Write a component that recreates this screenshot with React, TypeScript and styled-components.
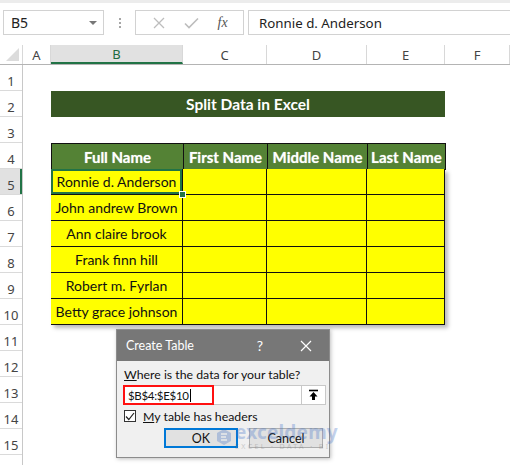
import React from "react";
import styled, { createGlobalStyle } from "styled-components";

const GlobalStyle = createGlobalStyle`
  * { box-sizing: border-box; }
  html, body { margin: 0; padding: 0; background: #fff; }
  body { font-family: "Noto Sans", "Liberation Sans", sans-serif; }
`;

const UI_FONT = `"Noto Sans", "Liberation Sans", sans-serif`;
const CELL_FONT = `Lato, "Liberation Sans", sans-serif`;
const DIALOG_FONT = `Lato, "Noto Sans", sans-serif`;
const GREEN = "#217346";

const Window = styled.div`
  position: relative;
  width: 510px;
  height: 465px;
  overflow: hidden;
  background: #fff;
  border-top: 3px solid #ececec;
  display: flex;
  flex-direction: column;
`;

/* ---------- formula bar ---------- */
const FormulaBar = styled.div`
  display: flex;
  align-items: stretch;
  height: 25px;
  margin-top: 7px;
  padding-left: 3px;
`;

const NameBox = styled.div`
  display: flex;
  align-items: center;
  justify-content: space-between;
  width: 101px;
  border: 1px solid #d2d2d2;
  padding: 0 6px 0 7px;
  font-family: ${UI_FONT};
  font-size: 14px;
  color: #222;
`;

const Caret = styled.span`
  width: 0;
  height: 0;
  border-left: 4px solid transparent;
  border-right: 4px solid transparent;
  border-top: 4px solid #777;
`;

const Grip = styled.div`
  width: 31px;
  display: flex;
  flex-direction: column;
  align-items: center;
  justify-content: center;
  gap: 2px;
  span {
    width: 2px;
    height: 2px;
    background: #a6a6a6;
  }
`;

const FxBox = styled.div`
  display: flex;
  align-items: center;
  justify-content: space-around;
  width: 109px;
  border: 1px solid #d2d2d2;
  padding: 0 6px 0 8px;
`;

const Fx = styled.span`
  font-family: "Liberation Serif", serif;
  font-style: italic;
  font-size: 14px;
  color: #555;
`;

const FormulaInput = styled.div`
  flex: 1;
  margin-left: 4px;
  border: 1px solid #d2d2d2;
  border-right: none;
  display: flex;
  align-items: center;
  padding-left: 10px;
  font-family: ${UI_FONT};
  font-size: 13.3px;
  color: #222;
`;

/* ---------- column headers ---------- */
const ColumnHeaders = styled.div`
  display: flex;
  height: 20px;
  margin-top: 10px;
  border-bottom: 1px solid #b4b4b4;
`;

const ColHead = styled.div<{ $w?: number; $selected?: boolean }>`
  width: ${(p) => (p.$w ? `${p.$w}px` : "auto")};
  flex: ${(p) => (p.$w ? "none" : "1")};
  display: flex;
  align-items: center;
  justify-content: center;
  font-family: ${UI_FONT};
  font-size: 13px;
  color: ${(p) => (p.$selected ? "#1e6b3f" : "#444")};
  background: ${(p) => (p.$selected ? "#e1e1e1" : "#fff")};
  border-right: 1px solid #d8d8d8;
  border-bottom: ${(p) => (p.$selected ? `2px solid ${GREEN}` : "none")};
`;

const SelectAll = styled.div`
  width: 23px;
  border-right: 1px solid #d8d8d8;
  display: flex;
  align-items: flex-end;
  justify-content: flex-end;
  padding: 0 3px 3px 0;
  span {
    width: 0;
    height: 0;
    border-left: 13px solid transparent;
    border-bottom: 13px solid #dcdcdc;
  }
`;

/* ---------- sheet body ---------- */
const SheetBody = styled.div`
  flex: 1;
  display: flex;
  align-items: stretch;
`;

const RowHeaders = styled.div`
  width: 23px;
  flex: none;
  border-right: 1px solid #c8c8c8;
`;

const RowHead = styled.div<{ $selected?: boolean }>`
  height: 26px;
  display: flex;
  align-items: center;
  justify-content: center;
  padding-top: 6px;
  font-family: ${UI_FONT};
  font-size: 13px;
  color: #444;
  background: ${(p) => (p.$selected ? "#e1e1e1" : "#fff")};
  border-bottom: 1px solid #dadada;
  box-shadow: ${(p) => (p.$selected ? `inset -2px 0 0 ${GREEN}` : "none")};
`;

const Canvas = styled.div`
  flex: 1;
  padding: 26px 0 0 28px;
`;

const TitleBand = styled.div`
  width: 394px;
  height: 26px;
  background: #375623;
  color: #fff;
  font-family: ${CELL_FONT};
  font-weight: 700;
  font-size: 15.5px;
  display: flex;
  align-items: center;
  justify-content: center;
  margin-bottom: 26px;
`;

const TableRow = styled.div`
  display: grid;
  grid-template-columns: 132px 84px 100px 78px;
  width: 394px;
  height: 26px;
`;

const HeadCell = styled.div`
  background: #548235;
  color: #fff;
  font-family: ${CELL_FONT};
  font-weight: 700;
  font-size: 15px;
  display: flex;
  align-items: center;
  justify-content: center;
  white-space: nowrap;
  border: 1px solid #111;
  margin: 0 -1px -1px 0;
  text-shadow: 0 0 1px rgba(255, 255, 255, 0.6);
`;

const DataBlock = styled.div`
  width: 394px;
  outline: 2px solid #ff1a1a;
  outline-offset: -2px;
  box-shadow: 3px 3px 4px rgba(0, 0, 0, 0.28);
`;

const Cell = styled.div<{ $active?: boolean }>`
  position: relative;
  background: #ffff00;
  font-family: ${CELL_FONT};
  font-size: 14px;
  color: #111;
  display: flex;
  align-items: center;
  justify-content: center;
  white-space: nowrap;
  border-right: 1px solid #111;
  border-bottom: 1px solid #111;
  box-shadow: ${(p) => (p.$active ? `inset 0 0 0 2px ${GREEN}` : "none")};
`;

const FillHandle = styled.span`
  position: absolute;
  right: -4px;
  bottom: -4px;
  width: 7px;
  height: 7px;
  background: ${GREEN};
  border: 1px solid #fff;
  z-index: 2;
`;

/* ---------- dialog ---------- */
const Dialog = styled.div`
  position: absolute;
  left: 116px;
  top: 326px;
  width: 214px;
  height: 129px;
  background: #f0f0f0;
  border: 1px solid #8c8c8c;
  box-shadow: 1px 1px 4px rgba(0, 0, 0, 0.25);
  font-family: ${DIALOG_FONT};
  font-size: 12.3px;
  color: #111;
  display: flex;
  flex-direction: column;
`;

const TitleBar = styled.div`
  height: 31px;
  background: #777;
  color: #fff;
  display: flex;
  align-items: center;
  padding: 0 17px 0 9px;
  font-size: 12.5px;
  span:first-child {
    flex: 1;
  }
`;

const Help = styled.span`
  margin-right: 37px;
  font-size: 14px;
`;

const DialogBody = styled.div`
  flex: 1;
  padding: 5px 3px 0 7px;
  position: relative;
`;

const Label = styled.div`
  height: 18px;
  line-height: 18px;
  white-space: nowrap;
`;

const RangeRow = styled.div`
  position: relative;
  display: flex;
  height: 20px;
  margin: 1px 0 0 -1px;
`;

const RangeInput = styled.div`
  flex: 1;
  background: #fff;
  border: 1px solid #c8c8c8;
  display: flex;
  align-items: center;
  padding-left: 4px;
  font-size: 11.5px;
  letter-spacing: -0.3px;
  &::after {
    content: "";
    width: 1px;
    height: 13px;
    background: #000;
    margin-left: 1px;
  }
`;

const RangeMark = styled.span`
  position: absolute;
  left: 0;
  top: 0;
  width: 91px;
  height: 20px;
  border: 2px solid #ff1010;
`;

const PickButton = styled.div`
  width: 24px;
  background: #fff;
  border: 1px solid #c8c8c8;
  border-left: none;
  display: flex;
  align-items: center;
  justify-content: center;
`;

const CheckRow = styled.div`
  display: flex;
  align-items: center;
  height: 16px;
  margin-top: 3px;
  gap: 7px;
`;

const CheckBox = styled.span`
  width: 12px;
  height: 12px;
  border: 1px solid #333;
  background: #fff;
  display: flex;
  align-items: center;
  justify-content: center;
`;

const Buttons = styled.div`
  display: flex;
  justify-content: flex-end;
  gap: 11px;
  margin-top: 4px;
  padding-right: 3px;
`;

const Button = styled.div<{ $focus?: boolean }>`
  width: 74px;
  height: 20px;
  display: flex;
  align-items: center;
  justify-content: center;
  background: #e1e1e1;
  border: ${(p) => (p.$focus ? "2px solid #0078d7" : "1px solid #adadad")};
  font-size: 12.5px;
`;

const Watermark = styled.div`
  position: absolute;
  left: 99px;
  top: 62px;
  display: flex;
  align-items: center;
  gap: 3px;
  opacity: 0.3;
  pointer-events: none;
`;

const WmText = styled.div`
  display: flex;
  flex-direction: column;
  line-height: 1;
  b {
    font-family: ${UI_FONT};
    font-size: 19px;
    color: #3e6fc7;
    letter-spacing: 0.2px;
  }
  span {
    font-family: ${UI_FONT};
    font-size: 7px;
    color: #6a6a6a;
    letter-spacing: 2.4px;
    margin-top: 1px;
  }
`;

const names = [
  "Ronnie d. Anderson",
  "John andrew Brown",
  "Ann claire brook",
  "Frank finn hill",
  "Robert m. Fyrlan",
  "Betty grace johnson",
];

export default function App() {
  const rows = Array.from({ length: 15 }, (_, i) => i + 1);
  return (
    <Window>
      <GlobalStyle />
      <FormulaBar>
        <NameBox>
          B5
          <Caret />
        </NameBox>
        <Grip>
          <span />
          <span />
          <span />
        </Grip>
        <FxBox>
          <svg width="12" height="12" viewBox="0 0 12 12">
            <path d="M1 1L11 11M11 1L1 11" stroke="#bdbdbd" strokeWidth="1.3" />
          </svg>
          <svg width="15" height="12" viewBox="0 0 15 12">
            <path d="M1 6.5L5 10.5L14 1.5" stroke="#bdbdbd" strokeWidth="1.6" fill="none" />
          </svg>
          <Fx>fx</Fx>
        </FxBox>
        <FormulaInput>Ronnie d. Anderson</FormulaInput>
      </FormulaBar>

      <ColumnHeaders>
        <SelectAll>
          <span />
        </SelectAll>
        <ColHead $w={28}>A</ColHead>
        <ColHead $w={132} $selected>
          B
        </ColHead>
        <ColHead $w={84}>C</ColHead>
        <ColHead $w={100}>D</ColHead>
        <ColHead $w={78}>E</ColHead>
        <ColHead>F</ColHead>
      </ColumnHeaders>

      <SheetBody>
        <RowHeaders>
          {rows.map((r) => (
            <RowHead key={r} $selected={r === 5}>
              {r}
            </RowHead>
          ))}
        </RowHeaders>
        <Canvas>
          <TitleBand>Split Data in Excel</TitleBand>
          <TableRow>
            <HeadCell>Full Name</HeadCell>
            <HeadCell>First Name</HeadCell>
            <HeadCell>Middle Name</HeadCell>
            <HeadCell>Last Name</HeadCell>
          </TableRow>
          <DataBlock>
            {names.map((n, i) => (
              <TableRow key={n}>
                <Cell $active={i === 0}>
                  {n}
                  {i === 0 && <FillHandle />}
                </Cell>
                <Cell />
                <Cell />
                <Cell />
              </TableRow>
            ))}
          </DataBlock>
        </Canvas>
      </SheetBody>

      <Dialog>
        <TitleBar>
          <span>Create Table</span>
          <Help>?</Help>
          <svg width="12" height="12" viewBox="0 0 12 12">
            <path d="M1 1L11 11M11 1L1 11" stroke="#fff" strokeWidth="1.2" />
          </svg>
        </TitleBar>
        <DialogBody>
          <Label>
            <u>W</u>here is the data for your table?
          </Label>
          <RangeRow>
            <RangeInput>$B$4:$E$10</RangeInput>
            <RangeMark />
            <PickButton>
              <svg width="11" height="12" viewBox="0 0 11 12">
                <path d="M1 1.5H10" stroke="#000" strokeWidth="1.6" />
                <path d="M5.5 3L1.5 7.5H4V11H7V7.5H9.5Z" fill="#000" />
              </svg>
            </PickButton>
          </RangeRow>
          <CheckRow>
            <CheckBox>
              <svg width="10" height="9" viewBox="0 0 10 9">
                <path d="M1 4.5L3.8 7.5L9 1" stroke="#222" strokeWidth="1.2" fill="none" />
              </svg>
            </CheckBox>
            <span>
              <u>M</u>y table has headers
            </span>
          </CheckRow>
          <Buttons>
            <Button $focus>OK</Button>
            <Button>Cancel</Button>
          </Buttons>
          <Watermark>
            <svg width="16" height="18" viewBox="0 0 16 18">
              <path d="M8 1L15 5V13L8 17L1 13V5Z" fill="#3e6fc7" />
              <path d="M5 6H11M5 9H10M5 12H11" stroke="#fff" strokeWidth="1.5" />
            </svg>
            <WmText>
              <b>exceldemy</b>
              <span>EXCEL · DATA · BI</span>
            </WmText>
          </Watermark>
        </DialogBody>
      </Dialog>
    </Window>
  );
}
